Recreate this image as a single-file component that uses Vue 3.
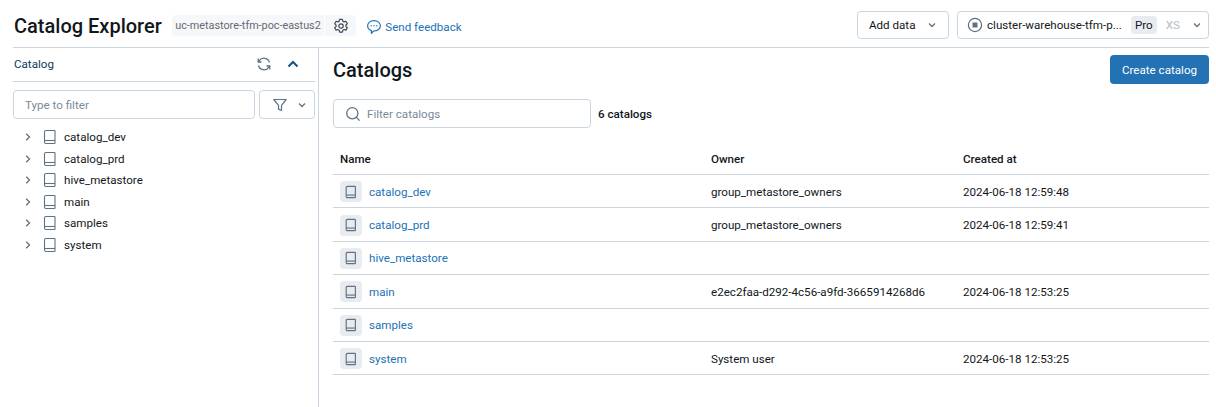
<script setup>
const catalogs = [
  { name: "catalog_dev", owner: "group_metastore_owners", created: "2024-06-18 12:59:48" },
  { name: "catalog_prd", owner: "group_metastore_owners", created: "2024-06-18 12:59:41" },
  { name: "hive_metastore", owner: "", created: "" },
  { name: "main", owner: "e2ec2faa-d292-4c56-a9fd-3665914268d6", created: "2024-06-18 12:53:25" },
  { name: "samples", owner: "", created: "" },
  { name: "system", owner: "System user", created: "2024-06-18 12:53:25" },
];

const BOOK_PATH = "M4 1.500h8.500a.5.5 0 0 1 .5.5v12a.5.5 0 0 1-.5.5H4A1.500 1.500 0 0 1 2.500 13V3A1.500 1.500 0 0 1 4 1.500z";
</script>

<template>
  <div class="page">
    <header class="top">
      <h1>Catalog Explorer</h1>
      <div class="metastore">
        <span class="tag">uc-metastore-tfm-poc-eastus2</span>
        <span class="tag gear">
          <svg width="16" height="16" viewBox="0 0 16 16" fill="none" stroke="#3d4a57" stroke-width="1.200" stroke-linejoin="round">
            <path d="M6.600 1.300h2.800l.4 1.900 1.300.7 1.800-.6 1.400 2.400-1.400 1.300v1.400l1.400 1.300-1.400 2.400-1.800-.6-1.300.7-.4 1.900H6.600l-.4-1.900-1.300-.7-1.800.6-1.400-2.400 1.400-1.300V7.100L1.700 5.700l1.400-2.400 1.800.6 1.300-.7z" />
            <circle cx="8" cy="8" r="2.200" />
          </svg>
        </span>
      </div>
      <a class="feedback">
        <svg width="16" height="16" viewBox="0 0 16 16" fill="none" stroke="#2272b4" stroke-width="1.200">
          <path d="M8 1.600c3.600 0 6.400 2.300 6.400 5.200S11.600 12 8 12h-.4L5.400 14.400v-2.800C3.200 10.900 1.600 9.100 1.600 6.800c0-2.900 2.800-5.200 6.400-5.200z" stroke-linejoin="round" />
          <circle cx="5.200" cy="6.800" r=".7" fill="#2272b4" stroke="none" />
          <circle cx="8" cy="6.800" r=".7" fill="#2272b4" stroke="none" />
          <circle cx="10.800" cy="6.800" r=".7" fill="#2272b4" stroke="none" />
        </svg>
        Send feedback
      </a>
      <div class="top-actions">
        <button class="btn add">
          Add data
          <svg class="chev" width="10" height="10" viewBox="0 0 10 10"><path d="M2 3.500l3 3 3-3" /></svg>
        </button>
        <button class="btn warehouse">
          <svg width="16" height="16" viewBox="0 0 16 16">
            <circle cx="8" cy="8" r="6.600" fill="none" stroke="#5f7281" stroke-width="1.200" />
            <rect x="5.500" y="5.500" width="5" height="5" rx=".6" fill="#5f7281" />
          </svg>
          <span class="wh-name">cluster-warehouse-tfm-p...</span>
          <span class="pro">Pro</span>
          <span class="xs">XS</span>
          <svg class="chev" width="10" height="10" viewBox="0 0 10 10"><path d="M2 3.500l3 3 3-3" /></svg>
        </button>
      </div>
    </header>

    <div class="body">
      <aside class="side">
        <div class="side-head">
          <span class="side-title">Catalog</span>
          <svg width="16" height="16" viewBox="0 0 16 16" fill="none" stroke="#5f7281" stroke-width="1.300">
            <path d="M13.500 6.500A5.700 5.700 0 0 0 3.300 4.700L2.300 6" />
            <path d="M2.500 9.500a5.700 5.700 0 0 0 10.200 1.800l1-1.300" />
            <path d="M2.200 2.600V6h3.300M13.800 13.400V10h-3.300" />
          </svg>
          <svg class="collapse" width="14" height="14" viewBox="0 0 14 14" fill="none" stroke="#0e538b" stroke-width="2"><path d="M2.500 9.500L7 5l4.500 4.500" /></svg>
        </div>
        <div class="side-filter">
          <div class="input side-input">Type to filter</div>
          <button class="btn filter-btn">
            <svg width="16" height="16" viewBox="0 0 16 16" fill="none" stroke="#5f7281" stroke-width="1.200" stroke-linejoin="round"><path d="M1.800 2.500h12.400L9.500 8.300v5.200l-3-1.400V8.300z" /></svg>
            <svg class="chev" width="10" height="10" viewBox="0 0 10 10"><path d="M2 3.500l3 3 3-3" /></svg>
          </button>
        </div>
        <ul class="tree">
          <li v-for="c in catalogs" :key="c.name">
            <svg class="tree-chev" width="10" height="10" viewBox="0 0 10 10" fill="none" stroke="#5f7281" stroke-width="1.300"><path d="M3.200 1.800L6.500 5 3.200 8.200" /></svg>
            <svg width="16" height="16" viewBox="0 0 16 16" fill="none" stroke="#5f7281" stroke-width="1.100">
              <path :d="BOOK_PATH" />
              <path d="M2.500 11.500h10.500" />
            </svg>
            <span>{{ c.name }}</span>
          </li>
        </ul>
      </aside>

      <main class="content">
        <div class="content-head">
          <h2>Catalogs</h2>
          <button class="create">Create catalog</button>
        </div>
        <div class="content-filter">
          <div class="input main-input">
            <svg width="16" height="16" viewBox="0 0 16 16" fill="none" stroke="#5f7281" stroke-width="1.300"><circle cx="7.300" cy="7.300" r="5.600" /><path d="M11.400 11.400l3.200 3.200" /></svg>
            Filter catalogs
          </div>
          <span class="count">6 catalogs</span>
        </div>
        <div class="table">
          <div class="row head">
            <span>Name</span>
            <span>Owner</span>
            <span>Created at</span>
          </div>
          <div v-for="c in catalogs" :key="c.name" class="row">
            <span class="name-cell">
              <span class="book-tile">
                <svg width="14" height="14" viewBox="0 0 16 16" fill="none" stroke="#5f7281" stroke-width="1.300">
                  <path :d="BOOK_PATH" />
                  <path d="M2.500 11.500h10.500" />
                </svg>
              </span>
              <a>{{ c.name }}</a>
            </span>
            <span>{{ c.owner }}</span>
            <span>{{ c.created }}</span>
          </div>
        </div>
      </main>
    </div>
  </div>
</template>

<style>
html, body {
  background: #fff;
  overflow: hidden;
}
</style>

<style scoped>
.page {
  height: 407px;
  display: flex;
  flex-direction: column;
  font-family: Roboto, "Open Sans", sans-serif;
  font-size: 11.600px;
  color: #11171c;
}

svg {
  flex: none;
  display: block;
}

.top {
  height: 48px;
  box-sizing: border-box;
  margin: 0 7px 0 13px;
  padding-top: 4px;
  display: flex;
  align-items: center;
  border-bottom: 1px solid #cbd5df;
}

h1 {
  margin: 0 10px 0 1px;
  font-size: 20px;
  font-weight: 500;
  white-space: nowrap;
}

.metastore {
  display: flex;
  gap: 1px;
}

.tag {
  height: 21px;
  display: flex;
  align-items: center;
  padding: 0 3.500px;
  background: #f6f7f9;
  border-radius: 4px 0 0 4px;
  color: #5f6b75;
  font-size: 10.800px;
  white-space: nowrap;
}

.gear {
  width: 31px;
  box-sizing: border-box;
  justify-content: center;
  border-radius: 0 4px 4px 0;
}

.feedback {
  margin: 2px 0 0 10px;
  display: flex;
  align-items: center;
  gap: 3px;
  color: #2272b4;
}

.top-actions {
  margin-left: auto;
  display: flex;
  gap: 8px;
  margin-top: -1px;
}

.btn {
  height: 28px;
  box-sizing: border-box;
  display: flex;
  align-items: center;
  background: #fff;
  border: 1px solid #cbd5df;
  border-radius: 4px;
  padding: 0;
  font: inherit;
  color: #11171c;
  white-space: nowrap;
}

.chev {
  fill: none;
  stroke: #5f7281;
  stroke-width: 1.300;
}

.add {
  width: 92px;
  padding-left: 11px;
  gap: 12px;
}

.warehouse {
  width: 252px;
  padding-left: 9px;
}

.wh-name {
  margin-left: 4px;
}

.pro {
  margin-left: 9px;
  padding: 2px 4px;
  background: #e8ecf0;
  border-radius: 4px;
}

.xs {
  margin-left: 9px;
  color: #b5bdc4;
}

.warehouse .chev {
  margin-left: 12px;
}

.body {
  flex: 1;
  display: flex;
  min-height: 0;
}

.side {
  width: 305px;
  box-sizing: border-box;
  margin-left: 13px;
  padding-right: 3px;
}

.side-head {
  height: 34px;
  box-sizing: border-box;
  display: flex;
  align-items: center;
  padding: 0 0 2px 1px;
  border-bottom: 1px solid #cbd5df;
}

.side-title {
  margin-right: auto;
  color: #0e3a5c;
}

.collapse {
  margin: 0 15px 0 14px;
}

.side-filter {
  margin-top: 8px;
  display: flex;
  gap: 4px;
}

.input {
  height: 29px;
  box-sizing: border-box;
  display: flex;
  align-items: center;
  border: 1px solid #cbd5df;
  border-radius: 4px;
  color: #7b8a97;
}

.side-input {
  width: 242px;
  padding-left: 11px;
}

.filter-btn {
  width: 56px;
  height: 29px;
  padding-left: 12px;
  gap: 9px;
}

.tree {
  list-style: none;
  margin: 7.500px 0 0;
  padding: 0;
}

.tree li {
  height: 21.500px;
  display: flex;
  align-items: center;
  padding-left: 10px;
}

.tree .tree-chev {
  margin-right: 9px;
}

.tree span {
  margin-left: 6px;
}

.content {
  flex: 1;
  min-width: 0;
  border-left: 1px solid #cbd5df;
  padding: 7px 7px 0 14px;
}

.content-head {
  height: 29px;
  display: flex;
  align-items: center;
  justify-content: space-between;
}

h2 {
  margin: 0;
  font-size: 20px;
  font-weight: 500;
}

.create {
  width: 99px;
  height: 29px;
  border: 0;
  border-radius: 4px;
  background: #2272b4;
  color: #fff;
  font: inherit;
}

.content-filter {
  margin-top: 15px;
  display: flex;
  align-items: center;
  gap: 7px;
}

.main-input {
  width: 258px;
  padding-left: 11px;
  gap: 6px;
}

.count {
  font-weight: 500;
}

.table {
  margin-top: 14px;
}

.row {
  height: 33.400px;
  box-sizing: border-box;
  display: grid;
  grid-template-columns: 371px 252px 1fr;
  align-items: center;
  padding: 1px 0 0 7px;
  border-bottom: 1px solid #cbd5df;
}

.row.head {
  height: 33px;
  font-weight: 500;
}

.name-cell {
  display: flex;
  align-items: center;
  gap: 7px;
}

.book-tile {
  width: 22px;
  height: 21px;
  display: grid;
  place-items: center;
  background: #e8ecf0;
  border-radius: 4px;
}

.name-cell a {
  color: #2272b4;
}
</style>
